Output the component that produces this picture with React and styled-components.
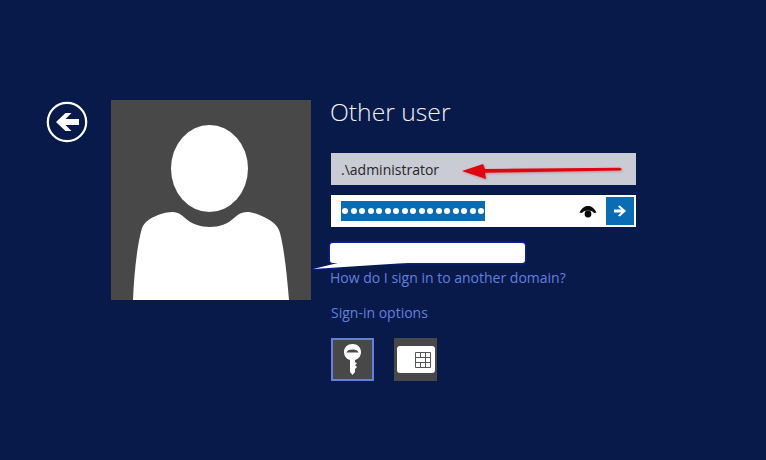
import React from "react";
import styled, { createGlobalStyle } from "styled-components";

const GlobalStyle = createGlobalStyle`
  html, body {
    margin: 0;
    padding: 0;
    background: #071a4a;
    font-family: "Open Sans", "Liberation Sans", sans-serif;
  }
`;

export default function App() {
  const dots = Array.from({ length: 17 });
  return (
    <>
      <GlobalStyle />
      <Page>
        <BackButton aria-label="Back">
          <svg width="42" height="42" viewBox="0 0 42 42">
            <circle cx="21" cy="21" r="19.2" fill="none" stroke="#fff" strokeWidth="2.2" />
            <path d="M10 21 L19.5 12 H25.5 L19.5 18 H33 V24 H19.5 L25.5 30 H19.5 Z" fill="#fff" />
          </svg>
        </BackButton>
        <Avatar>
          <svg width="200" height="200" viewBox="0 0 200 200">
            <ellipse cx="98.5" cy="68.5" rx="38.5" ry="43.5" fill="#fff" />
            <path
              d="M22 200 C23 175 26 145 31 128 C34 121 40 118 47 115 C52 113 57 112 62 112 C66 112 70 114 74 118 C80 124 90 127 99 127 C108 127 117 124 123 118 C127 114 131 112 136 112 C141 112 147 114 153 117 C161 121 167 125 169 133 C173 148 176 175 178 200 Z"
              fill="#fff"
            />
          </svg>
        </Avatar>
        <Panel>
          <Title>Other user</Title>
          <UserField>
            <UserText>.\administrator</UserText>
            <RedArrow width="165" height="20" viewBox="0 0 165 20">
              <path d="M0 9 L21 2 L23 7 L158 5.8 L160 7.2 L158 8.6 L23 10.8 L24 17 Z" fill="#e0060f" />
            </RedArrow>
          </UserField>
          <PasswordField>
            <Selection>
              {dots.map((_, i) => (
                <Dot key={i} />
              ))}
            </Selection>
            <Eye width="18" height="14" viewBox="0 0 18 14">
              <path d="M0.5 7.5 C3 2.5 6 1 9 1 C12 1 15 2.5 17.5 7.5 L15 8 C13.5 6.2 11.5 5.5 9 5.5 C6.5 5.5 4.5 6.2 3 8 Z" fill="#0a0a0a" />
              <circle cx="9" cy="9" r="3.4" fill="#0a0a0a" />
            </Eye>
            <Submit aria-label="Submit">
              <svg width="14" height="12" viewBox="0 0 14 12">
                <path d="M1 4.6 H8.2 L5 1.6 L6.8 0.4 L13 6 L6.8 11.6 L5 10.4 L8.2 7.4 H1 Z" fill="#fff" />
              </svg>
            </Submit>
          </PasswordField>
          <Redaction>
            <RedactionTail width="120" height="30" viewBox="0 0 120 30">
              <path d="M32 11.5 L0 18.5 L30 17" fill="none" stroke="#0a1fa0" strokeWidth="1" />
              <path d="M32 10.5 L1 18 L86 12.5 L116 11 V5 H32 Z" fill="#fff" />
            </RedactionTail>
          </Redaction>
          <LinkText>How do I sign in to another domain?</LinkText>
          <Options>Sign-in options</Options>
          <Tiles>
            <Tile selected>
              <svg width="17" height="31" viewBox="0 0 17 31">
                <path
                  d="M8.5 0 C13.5 0 17 3.5 17 8 C17 12 14.5 15 11 16 V18 L13 19.5 L11 21 L13 23 L11 25 V28 L8.5 31 L6 28 V16 C2.5 15 0 12 0 8 C0 3.5 3.5 0 8.5 0 Z"
                  fill="#fff"
                />
                <path d="M2.5 8.5 C3 6.5 5 5.5 8.5 5.5 C12 5.5 14 6.5 14.5 8.5 Z" fill="#4a4a4a" />
              </svg>
            </Tile>
            <Tile>
              <SmartCard>
                <svg width="16" height="16" viewBox="0 0 16 16">
                  <path
                    d="M0.5 0.5 H15.5 V15.5 H0.5 Z M0.5 5.5 H15.5 M0.5 10.5 H15.5 M5.5 0.5 V5.5 M10.5 0.5 V5.5 M10.5 5.5 V10.5 M5.5 10.5 V15.5 M10.5 10.5 V15.5"
                    fill="none"
                    stroke="#555"
                    strokeWidth="1"
                  />
                </svg>
              </SmartCard>
            </Tile>
          </Tiles>
        </Panel>
      </Page>
    </>
  );
}

const Page = styled.div`
  width: 766px;
  height: 460px;
  box-sizing: border-box;
  padding: 100px 0 0 46px;
  display: flex;
  align-items: flex-start;
  overflow: hidden;
  background: #071a4a;
`;

const BackButton = styled.div`
  width: 42px;
  height: 42px;
  margin-right: 23px;
  margin-top: 1px;
`;

const Avatar = styled.div`
  width: 200px;
  height: 200px;
  background: #484848;
  flex-shrink: 0;
  margin-right: 20px;
  overflow: hidden;
  svg {
    display: block;
  }
`;

const Panel = styled.div`
  width: 305px;
  display: flex;
  flex-direction: column;
  align-items: flex-start;
`;

const Title = styled.div`
  color: #f2f3f7;
  font-size: 24.7px;
  font-weight: 300;
  line-height: 26px;
  margin: -1px 0 28px -1px;
`;

const UserField = styled.div`
  position: relative;
  width: 305px;
  height: 32px;
  background: #c9cbd5;
  display: flex;
  align-items: center;
  padding-left: 10px;
  box-sizing: border-box;
`;

const UserText = styled.span`
  color: #262626;
  font-size: 14px;
`;

const RedArrow = styled.svg`
  position: absolute;
  left: 131px;
  top: 9px;
  filter: drop-shadow(1px 1px 1px rgba(190, 90, 100, 0.55));
`;

const PasswordField = styled.div`
  width: 305px;
  height: 32px;
  margin-top: 10px;
  background: #fff;
  display: flex;
  align-items: center;
  padding: 0 2px 0 10px;
  box-sizing: border-box;
`;

const Selection = styled.div`
  width: 144px;
  height: 20px;
  background: #0a6cb4;
  display: flex;
  align-items: center;
  justify-content: space-between;
  padding: 0 1px;
  box-sizing: border-box;
`;

const Dot = styled.span`
  width: 6px;
  height: 6px;
  border-radius: 50%;
  background: #fff;
`;

const Eye = styled.svg`
  margin-left: auto;
  margin-right: 9px;
  margin-top: 1px;
`;

const Submit = styled.div`
  width: 28px;
  height: 28px;
  background: #0a6cb4;
  display: flex;
  align-items: center;
  justify-content: center;
`;

const Redaction = styled.div`
  position: relative;
  width: 195px;
  height: 20px;
  margin-top: 16px;
  margin-left: -1px;
  background: #fff;
  border-radius: 3px;
  box-shadow: 0 0 0 1.5px #0a1fa0;
`;

const RedactionTail = styled.svg`
  position: absolute;
  left: -18px;
  top: 8px;
`;

const LinkText = styled.div`
  color: #6480de;
  font-size: 14px;
  line-height: 20px;
  margin: 5px 0 0 -1px;
`;

const Options = styled.div`
  color: #6480de;
  font-size: 14px;
  line-height: 20px;
  margin-top: 15px;
`;

const Tiles = styled.div`
  display: flex;
  gap: 20px;
  margin-top: 15px;
`;

const Tile = styled.div`
  width: 43px;
  height: 43px;
  box-sizing: border-box;
  background: #484848;
  border: ${({ selected }) => (selected ? "2px solid #6480de" : "none")};
  display: flex;
  align-items: center;
  justify-content: center;
`;

const SmartCard = styled.div`
  width: 38px;
  height: 27px;
  background: #fff;
  border-radius: 3px;
  display: flex;
  align-items: center;
  justify-content: flex-end;
  padding-right: 4px;
  box-sizing: border-box;
`;
